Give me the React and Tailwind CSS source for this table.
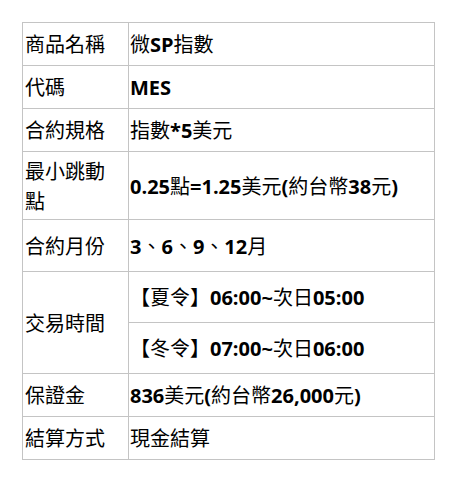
import React from "react";

const font = { fontFamily: '"Open Sans", "Noto Sans CJK TC", sans-serif' };

// Latin runs are bold, CJK runs stay regular (like the source page's fallback font)
function Mixed({ text }) {
  const parts = text.split(/([\u3000-\u303f\u3400-\u9fff\uff00-\uffef]+)/);
  return (
    <>
      {parts.map((p, i) =>
        /[\u3000-\u303f\u3400-\u9fff\uff00-\uffef]/.test(p) ? (
          <span key={i} className="font-normal" style={{ fontFamily: '"Noto Sans CJK TC", sans-serif' }}>
            {p}
          </span>
        ) : (
          <span key={i} className="font-bold">
            {p}
          </span>
        )
      )}
    </>
  );
}

const rows = [
  { label: "商品名稱", value: "微SP指數", h: "h-[43px]" },
  { label: "代碼", value: "MES", h: "h-[43px]" },
  { label: "合約規格", value: "指數*5美元", h: "h-[43px]" },
  { label: "最小跳動點", value: "0.25點=1.25美元(約台幣38元)", h: "h-[68px]" },
  { label: "合約月份", value: "3、6、9、12月", h: "h-[52px]" },
];

const tail = [
  { label: "保證金", value: "836美元(約台幣26,000元)" },
  { label: "結算方式", value: "現金結算" },
];

const cell = "border border-[#c4c4c4] align-middle text-[20px] leading-[29px] text-black";

export default function App() {
  return (
    <div className="w-[465px] h-[496px] bg-white pt-[22px] pl-[22px]" style={font}>
      <table className="border-collapse w-[413px] table-fixed">
        <tbody>
          {rows.map((r) => (
            <tr key={r.label} className={r.h}>
              <td className={`${cell} w-[106px] pl-[2px] pr-[4px]`}>
                <span style={{ fontFamily: '"Noto Sans CJK TC", sans-serif' }}>{r.label}</span>
              </td>
              <td className={`${cell} pl-[1px]`}>
                <Mixed text={r.value} />
              </td>
            </tr>
          ))}
          <tr className="h-[51px]">
            <td rowSpan={2} className={`${cell} w-[106px] pl-[2px]`}>
              <span style={{ fontFamily: '"Noto Sans CJK TC", sans-serif' }}>交易時間</span>
            </td>
            <td className={`${cell} pl-[1px]`}>
              <Mixed text="【夏令】06:00~次日05:00" />
            </td>
          </tr>
          <tr className="h-[51px]">
            <td className={`${cell} pl-[1px]`}>
              <Mixed text="【冬令】07:00~次日06:00" />
            </td>
          </tr>
          {tail.map((r) => (
            <tr key={r.label} className="h-[43px]">
              <td className={`${cell} w-[106px] pl-[2px]`}>
                <span style={{ fontFamily: '"Noto Sans CJK TC", sans-serif' }}>{r.label}</span>
              </td>
              <td className={`${cell} pl-[1px]`}>
                <Mixed text={r.value} />
              </td>
            </tr>
          ))}
        </tbody>
      </table>
    </div>
  );
}
